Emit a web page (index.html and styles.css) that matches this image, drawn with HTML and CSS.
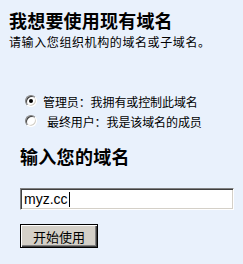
FILE: index.html
```html
<!DOCTYPE html>
<html>
<head>
<meta charset="utf-8">
<link rel="stylesheet" href="styles.css">
</head>
<body>
<div class="page">
  <h1 class="title">我想要使用现有域名</h1>
  <p class="subtitle">请输入您组织机构的域名或子域名。</p>
  <div class="options">
    <label class="option">
      <span class="radio checked"><span class="dot"></span></span>
      <span class="option-text">管理员：我拥有或控制此域名</span>
    </label>
    <label class="option">
      <span class="radio"></span>
      <span class="option-text second">最终用户：我是该域名的成员</span>
    </label>
  </div>
  <div class="domain">
    <h2 class="domain-title">输入您的域名</h2>
    <div class="field"><span class="field-text">myz.cc</span><span class="caret"></span></div>
    <button class="btn" type="button">开始使用</button>
  </div>
</div>
</body>
</html>
```
FILE: styles.css
```css
html, body {
  margin: 0;
  padding: 0;
  background: #e9f1fc;
}
body {
  font-family: "Noto Sans CJK SC", "Liberation Sans", sans-serif;
  color: #000;
}
.page {
  padding: 9px 0 0 9px;
}
.title {
  margin: 0;
  font-size: 18px;
  line-height: 22px;
  font-weight: bold;
  letter-spacing: 0.2px;
}
.subtitle {
  margin: 3px 0 0 0;
  font-size: 12px;
  line-height: 16px;
  letter-spacing: 0.6px;
}
.options {
  margin: 43px 0 0 16px;
  display: flex;
  flex-direction: column;
  gap: 4px;
}
.option {
  display: flex;
  align-items: center;
  height: 16px;
  font-size: 12px;
}
.radio {
  position: relative;
  width: 12px;
  height: 12px;
  box-sizing: border-box;
  border-radius: 50%;
  border: 1px solid;
  border-color: #808080 #ffffff #ffffff #808080;
  background: #fff;
  box-shadow: inset 1px 1px 0 #404040, inset -1px -1px 0 #d4d0c8;
  margin-right: 6px;
  flex: none;
}
.dot {
  position: absolute;
  left: 3px;
  top: 3px;
  width: 4px;
  height: 4px;
  border-radius: 50%;
  background: #000;
}
.option-text {
  letter-spacing: -0.1px;
}
.option-text.second {
  margin-left: 4px;
}
.domain {
  margin: 16px 0 0 11px;
}
.domain-title {
  margin: 0;
  font-size: 18px;
  line-height: 22px;
  font-weight: bold;
  letter-spacing: 0.3px;
}
.field {
  margin-top: 21px;
  width: 214px;
  height: 22px;
  box-sizing: border-box;
  border: 1px solid;
  border-color: #808080 #ffffff #ffffff #808080;
  box-shadow: inset 1px 1px 0 #404040, inset -1px -1px 0 #d4d0c8;
  background: #fff;
  display: flex;
  align-items: center;
  padding-left: 3px;
  font-family: "Liberation Sans", sans-serif;
  font-size: 14px;
}
.caret {
  width: 1px;
  height: 15px;
  background: #000;
  margin-left: 1px;
}
.btn {
  display: block;
  margin-top: 14px;
  width: 78px;
  height: 24px;
  padding: 0;
  background: #d4d0c8;
  border: 1px solid #000;
  box-shadow: inset 1px 1px 0 #ffffff, inset -1px -1px 0 #404040, inset -2px -2px 0 #808080;
  font-family: "Noto Sans CJK SC", sans-serif;
  font-size: 13px;
  color: #000;
}
```
